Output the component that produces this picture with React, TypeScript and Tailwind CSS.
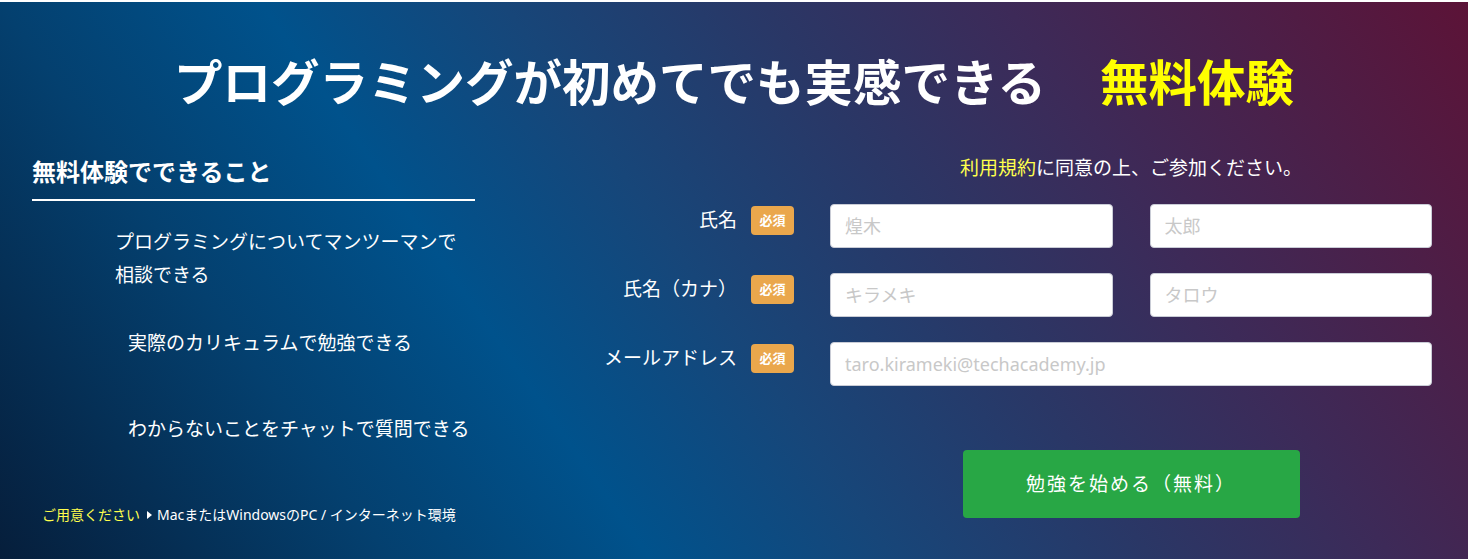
import React from "react";

const jp = "font-['Noto_Sans','Noto_Sans_CJK_JP',sans-serif]";

type RowProps = {
  label: string;
  children: React.ReactNode;
};

const Badge = () => (
  <span className="flex h-[29px] w-[43px] items-center justify-center rounded-[4px] bg-[#eaa74c] text-[13px] font-bold text-white">
    必須
  </span>
);

const FormRow: React.FC<RowProps> = ({ label, children }) => (
  <div className="flex items-start">
    <div className="mt-[2px] flex h-[29px] w-[214px] shrink-0 items-center justify-end gap-[14px]">
      <span className="text-[19px] leading-[29px] text-white">{label}</span>
      <Badge />
    </div>
    <div className="ml-[36px] flex flex-1 gap-[37px]">{children}</div>
  </div>
);

const Field = ({ placeholder }: { placeholder: string }) => (
  <input
    type="text"
    placeholder={placeholder}
    className="h-[44px] w-full min-w-0 rounded-[4px] border border-[#c9ccd6] bg-white px-[14px] text-[18px] text-[#333] outline-none placeholder:text-[#c8c8c8]"
  />
);

export default function App() {
  return (
    <div className={`${jp} h-[559px] w-full overflow-hidden bg-white pt-[2px]`}>
      <div className="h-full bg-[linear-gradient(55deg,#061e3b_0%,#04406f_21%,#00528c_35%,#174679_48%,#2a3766_62%,#3d2a58_75%,#5c1337_100%)]">
        <h1 className="pt-[51px] text-center text-[48.5px] font-bold leading-[58px] text-white">
          プログラミングが初めてでも実感できる
          <span className="ml-[54px] text-[#ffff00]">無料体験</span>
        </h1>

        <div className="mt-[44px] flex">
          {/* left column */}
          <div className="ml-[32px] w-[443px] shrink-0">
            <h2 className="border-b-2 border-white pb-[11px] pt-[1px] text-[24px] font-bold leading-[32px] text-white">
              無料体験でできること
            </h2>
            <ul className="text-[19px] leading-[33px] text-white">
              <li className="mt-[25px] pl-[83px]">
                プログラミングについてマンツーマンで
                <br />
                相談できる
              </li>
              <li className="mt-[35px] pl-[96px]">実際のカリキュラムで勉強できる</li>
              <li className="mt-[53px] pl-[96px]">わからないことをチャットで質問できる</li>
            </ul>
            <p className="mt-[59px] flex items-center pl-[10px] text-[14px] leading-[20px] text-white">
              <span className="text-[#ffff4d]">ご用意ください</span>
              <span className="ml-[7px] mr-[5px] h-0 w-0 border-y-[4px] border-l-[5px] border-y-transparent border-l-white" />
              MacまたはWindowsのPC / インターネット環境
            </p>
          </div>

          {/* right column */}
          <div className="ml-[105px] mr-[36px] flex-1">
            <p className="pl-[250px] text-center text-[19px] leading-[26px] text-white">
              <span className="text-[#ffff4d]">利用規約</span>に同意の上、ご参加ください。
            </p>
            <div className="mt-[23px] flex flex-col gap-[25px]">
              <FormRow label="氏名">
                <Field placeholder="煌木" />
                <Field placeholder="太郎" />
              </FormRow>
              <FormRow label="氏名（カナ）">
                <Field placeholder="キラメキ" />
                <Field placeholder="タロウ" />
              </FormRow>
              <FormRow label="メールアドレス">
                <Field placeholder="taro.kirameki@techacademy.jp" />
              </FormRow>
            </div>
            <div className="mt-[64px] flex justify-center pl-[250px]">
              <button className="h-[68px] w-[337px] rounded-[4px] bg-[#28a745] text-[19px] tracking-[2px] text-white">
                勉強を始める（無料）
              </button>
            </div>
          </div>
        </div>
      </div>
    </div>
  );
}
